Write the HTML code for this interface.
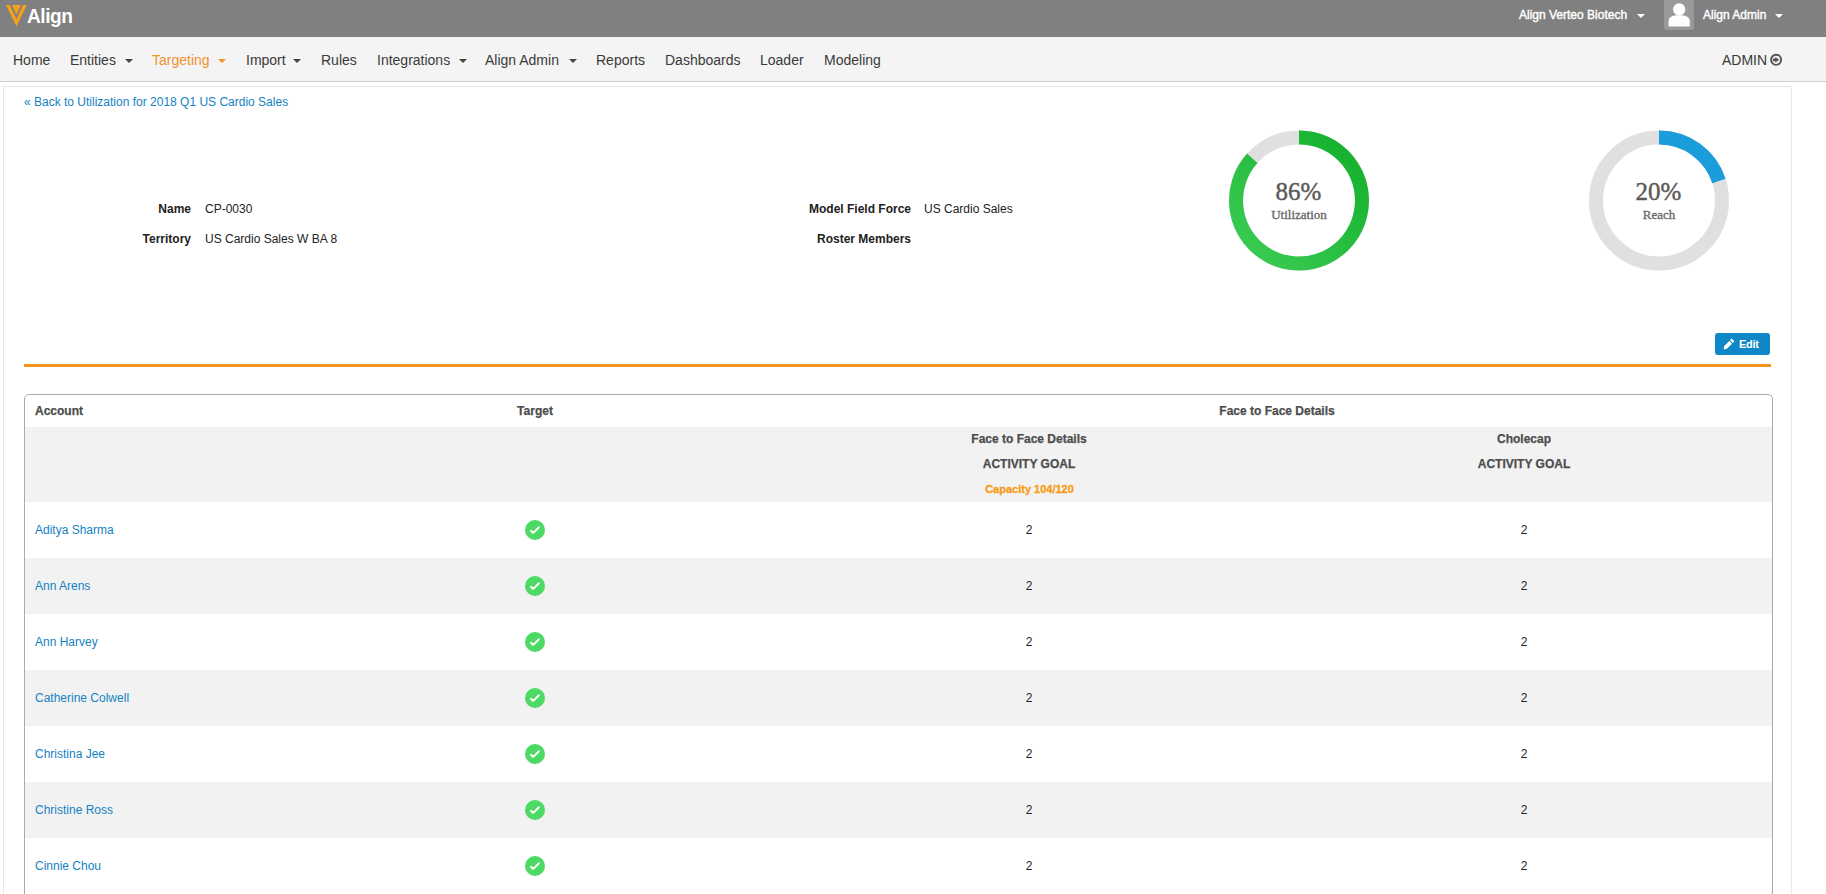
<!DOCTYPE html>
<html><head><meta charset="utf-8">
<style>
*{box-sizing:border-box;margin:0;padding:0}
html,body{width:1826px;height:894px;overflow:hidden;background:#fff;font-family:"Liberation Sans",sans-serif;color:#333}
.abs{position:absolute;white-space:nowrap}
#top{position:absolute;left:0;top:0;width:1826px;height:37px;background:#808080}
#nav{position:absolute;left:0;top:37px;width:1826px;height:45px;background:#f4f4f4;border-bottom:1px solid #cfcfcf}
.nv{position:absolute;top:15px;font-size:14px;line-height:16px;color:#3a3a3a}
.caret{position:absolute;width:0;height:0;border-left:4px solid transparent;border-right:4px solid transparent;border-top:4px solid #444}
#cont{position:absolute;left:3px;top:86px;width:1789px;height:900px;border:1px solid #e8e8e8;background:#fff}
a{color:#1582c3;text-decoration:none}
.lbl{position:absolute;font-size:12px;font-weight:bold;color:#222;text-align:right;line-height:14px}
.val{position:absolute;font-size:12px;color:#222;line-height:14px}
#tbl{position:absolute;left:24px;top:394px;width:1749px;height:520px;border:1px solid #aaa;border-radius:5px;overflow:hidden;background:#fff}
.th{position:absolute;font-size:12px;font-weight:bold;color:#4d4d4d;-webkit-text-stroke:0.25px #4d4d4d;line-height:14px;white-space:nowrap}
.row{position:absolute;left:0;width:1747px;height:56px}
.gray{background:#f2f2f2}
.tw{font-size:12px;line-height:14px;color:#fff;-webkit-text-stroke:0.4px #fff}
.nm{position:absolute;left:10px;top:21px;font-size:12px;line-height:14px;color:#1582c3}
.num{position:absolute;top:21px;font-size:12px;line-height:14px;color:#222;width:40px;text-align:center}
.chk{position:absolute;left:500px;top:18px;width:20px;height:20px}
</style></head><body>
<div id="top">
<svg class="abs" style="left:0;top:0" width="30" height="30" viewBox="0 0 30 30"><path d="M5.9 5 L26.7 5 L16.5 26.4 Z M9.6 5 L16.5 19.0 L23.0 5 Z" fill="#f5a01a" fill-rule="evenodd"/><path d="M11.9 5 L20.9 5 L16.4 14.5 Z" fill="#f5a01a"/></svg>
<span class="abs" style="left:26.5px;top:4px;font-size:21px;line-height:24px;font-weight:bold;color:#fff;letter-spacing:-0.5px;transform:scaleX(0.91);transform-origin:0 0">Align</span>
<span class="abs tw" style="left:1519px;top:8px">Align Verteo Biotech</span>
<div class="caret" style="left:1637px;top:14px;border-top-color:#fff"></div>
<div class="abs" style="left:1664px;top:0;width:30px;height:30px;background:#999;border-radius:0 0 3px 3px"><svg width="30" height="30" viewBox="0 0 30 30"><circle cx="15.2" cy="9.4" r="6.1" fill="#fff"/><path d="M4.6 26.4 L4.6 21.5 C4.6 17.2 8 15.3 15.2 15.3 C22.4 15.3 25.8 17.2 25.8 21.5 L25.8 26.4 Q25.8 26.6 25.4 26.6 L5 26.6 Q4.6 26.6 4.6 26.4 Z" fill="#fff"/></svg></div>
<span class="abs tw" style="left:1703px;top:8px">Align Admin</span>
<div class="caret" style="left:1775px;top:14px;border-top-color:#fff"></div>
</div>
<div id="nav">
<span class="nv" style="left:13px">Home</span>
<span class="nv" style="left:70px">Entities</span><div class="caret" style="left:125px;top:22px"></div>
<span class="nv" style="left:152px;color:#f0922e">Targeting</span><div class="caret" style="left:218px;top:22px;border-top-color:#f0922e"></div>
<span class="nv" style="left:246px">Import</span><div class="caret" style="left:293px;top:22px"></div>
<span class="nv" style="left:321px">Rules</span>
<span class="nv" style="left:377px">Integrations</span><div class="caret" style="left:459px;top:22px"></div>
<span class="nv" style="left:485px">Align Admin</span><div class="caret" style="left:569px;top:22px"></div>
<span class="nv" style="left:596px">Reports</span>
<span class="nv" style="left:665px">Dashboards</span>
<span class="nv" style="left:760px">Loader</span>
<span class="nv" style="left:824px">Modeling</span>
<span class="nv" style="left:1722px">ADMIN</span>
<svg class="abs" style="left:1769px;top:16px" width="14" height="14" viewBox="0 0 14 14"><circle cx="7.1" cy="6.8" r="5.05" fill="none" stroke="#555" stroke-width="1.9"/><path d="M3.9 5.4 L6.3 5.4 L6.3 3.9 L10.2 6.85 L6.3 9.8 L6.3 8.3 L3.9 8.3 Z" fill="#555"/></svg>
</div>
<div id="cont"></div>
<a class="abs" style="left:24px;top:95px;font-size:12px;line-height:14px">« Back to Utilization for 2018 Q1 US Cardio Sales</a>
<span class="lbl" style="left:91px;top:202px;width:100px">Name</span><span class="val" style="left:205px;top:202px">CP-0030</span>
<span class="lbl" style="left:91px;top:232px;width:100px">Territory</span><span class="val" style="left:205px;top:232px">US Cardio Sales W BA 8</span>
<span class="lbl" style="left:711px;top:202px;width:200px">Model Field Force</span><span class="val" style="left:924px;top:202px">US Cardio Sales</span>
<span class="lbl" style="left:711px;top:232px;width:200px">Roster Members</span>
<svg class="abs" style="left:1219px;top:120px" width="160" height="160" viewBox="0 0 160 160">
<defs><linearGradient id="g1" gradientUnits="userSpaceOnUse" x1="150" y1="10" x2="10" y2="150"><stop offset="0" stop-color="#0fae28"/><stop offset="1" stop-color="#3fce58"/></linearGradient></defs>
<circle cx="80" cy="80.5" r="63" fill="none" stroke="#e0e0e0" stroke-width="14"/>
<path d="M80.00 17.50 A63 63 0 1 1 33.27 38.25" fill="none" stroke="url(#g1)" stroke-width="14"/>
<text x="79.5" y="79.5" text-anchor="middle" font-family="Liberation Serif" font-size="25" fill="#5a5a5a" stroke="#5a5a5a" stroke-width="0.45">86%</text>
<text x="80" y="99.2" text-anchor="middle" font-family="Liberation Serif" font-size="13" fill="#666" stroke="#666" stroke-width="0.3">Utilization</text>
</svg>
<svg class="abs" style="left:1579px;top:120px" width="160" height="160" viewBox="0 0 160 160">
<circle cx="80" cy="80.5" r="63" fill="none" stroke="#e0e0e0" stroke-width="14"/>
<path d="M80.00 17.50 A63 63 0 0 1 139.92 61.03" fill="none" stroke="#1a9ddb" stroke-width="14"/>
<text x="79.5" y="79.5" text-anchor="middle" font-family="Liberation Serif" font-size="25" fill="#5a5a5a" stroke="#5a5a5a" stroke-width="0.45">20%</text>
<text x="80" y="99.2" text-anchor="middle" font-family="Liberation Serif" font-size="13" fill="#666" stroke="#666" stroke-width="0.3">Reach</text>
</svg>
<div class="abs" style="left:1715px;top:333px;width:55px;height:22px;background:#0e87c6;border-radius:3px">
<svg class="abs" style="left:8px;top:6px;overflow:visible" width="11" height="11" viewBox="0 0 11 11"><path d="M0.60 10.40 L1.24 7.08 L6.33 1.99 L9.01 4.67 L3.92 9.76 Z M6.96 1.35 L8.73 -0.42 L11.42 2.27 L9.65 4.04 Z" fill="#fff"/></svg>
<span class="abs" style="left:24px;top:5px;font-size:11px;line-height:13px;font-weight:bold;color:#fff;letter-spacing:-0.3px">Edit</span></div>
<div class="abs" style="left:24px;top:364px;width:1747px;height:3px;background:#f5911f"></div>
<div id="tbl">
<span class="th" style="left:10px;top:9px">Account</span>
<span class="th" style="left:410px;top:9px;width:200px;text-align:center">Target</span>
<span class="th" style="left:1152px;top:9px;width:200px;text-align:center">Face to Face Details</span>
<div class="row gray" style="top:32px;height:75px">
<span class="th" style="left:904px;top:5px;width:200px;text-align:center">Face to Face Details</span>
<span class="th" style="left:904px;top:30px;width:200px;text-align:center">ACTIVITY GOAL</span>
<span class="th" style="left:904.5px;top:55px;width:200px;text-align:center;font-size:11px;color:#f99b14;-webkit-text-stroke:0.3px #f99b14">Capacity 104/120</span>
<span class="th" style="left:1399px;top:5px;width:200px;text-align:center">Cholecap</span>
<span class="th" style="left:1399px;top:30px;width:200px;text-align:center">ACTIVITY GOAL</span>
</div>
<div class="row" style="top:107px"><span class="nm">Aditya Sharma</span><svg class="chk" viewBox="0 0 20 20"><circle cx="10" cy="10" r="10" fill="#4cd964"/><path d="M5.4 10.3 L8.2 12.9 L14.4 6.8" fill="none" stroke="#fff" stroke-width="2.1"/></svg><span class="num" style="left:984px">2</span><span class="num" style="left:1479px">2</span></div>
<div class="row gray" style="top:163px"><span class="nm">Ann Arens</span><svg class="chk" viewBox="0 0 20 20"><circle cx="10" cy="10" r="10" fill="#4cd964"/><path d="M5.4 10.3 L8.2 12.9 L14.4 6.8" fill="none" stroke="#fff" stroke-width="2.1"/></svg><span class="num" style="left:984px">2</span><span class="num" style="left:1479px">2</span></div>
<div class="row" style="top:219px"><span class="nm">Ann Harvey</span><svg class="chk" viewBox="0 0 20 20"><circle cx="10" cy="10" r="10" fill="#4cd964"/><path d="M5.4 10.3 L8.2 12.9 L14.4 6.8" fill="none" stroke="#fff" stroke-width="2.1"/></svg><span class="num" style="left:984px">2</span><span class="num" style="left:1479px">2</span></div>
<div class="row gray" style="top:275px"><span class="nm">Catherine Colwell</span><svg class="chk" viewBox="0 0 20 20"><circle cx="10" cy="10" r="10" fill="#4cd964"/><path d="M5.4 10.3 L8.2 12.9 L14.4 6.8" fill="none" stroke="#fff" stroke-width="2.1"/></svg><span class="num" style="left:984px">2</span><span class="num" style="left:1479px">2</span></div>
<div class="row" style="top:331px"><span class="nm">Christina Jee</span><svg class="chk" viewBox="0 0 20 20"><circle cx="10" cy="10" r="10" fill="#4cd964"/><path d="M5.4 10.3 L8.2 12.9 L14.4 6.8" fill="none" stroke="#fff" stroke-width="2.1"/></svg><span class="num" style="left:984px">2</span><span class="num" style="left:1479px">2</span></div>
<div class="row gray" style="top:387px"><span class="nm">Christine Ross</span><svg class="chk" viewBox="0 0 20 20"><circle cx="10" cy="10" r="10" fill="#4cd964"/><path d="M5.4 10.3 L8.2 12.9 L14.4 6.8" fill="none" stroke="#fff" stroke-width="2.1"/></svg><span class="num" style="left:984px">2</span><span class="num" style="left:1479px">2</span></div>
<div class="row" style="top:443px"><span class="nm">Cinnie Chou</span><svg class="chk" viewBox="0 0 20 20"><circle cx="10" cy="10" r="10" fill="#4cd964"/><path d="M5.4 10.3 L8.2 12.9 L14.4 6.8" fill="none" stroke="#fff" stroke-width="2.1"/></svg><span class="num" style="left:984px">2</span><span class="num" style="left:1479px">2</span></div>

</div>
</body></html>
